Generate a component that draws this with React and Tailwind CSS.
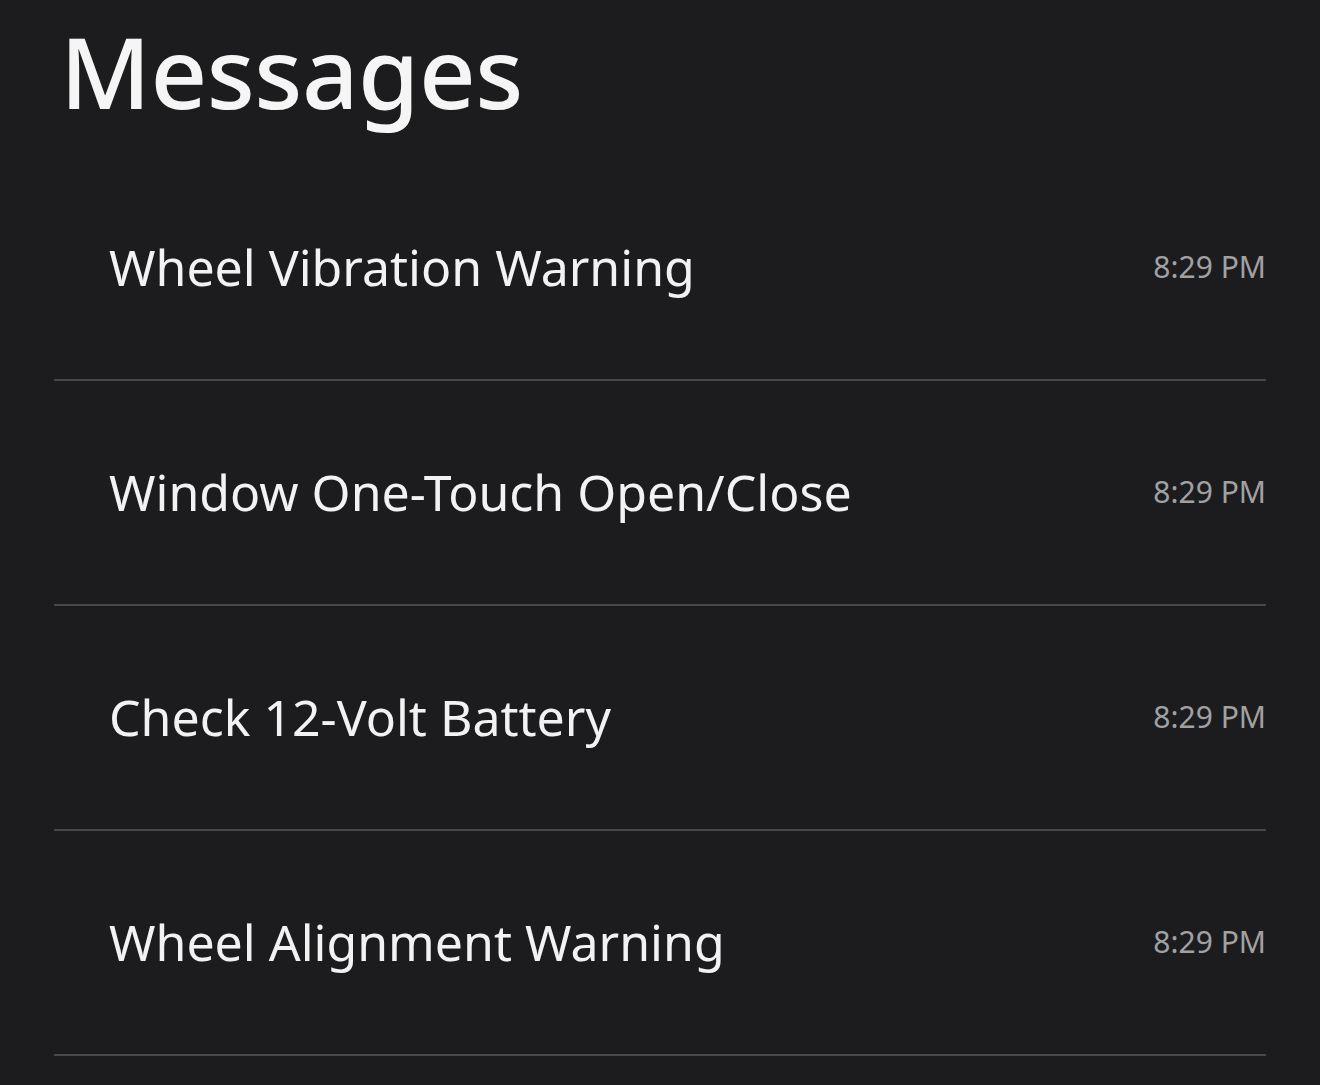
import React from "react";

const messages = [
  { title: "Wheel Vibration Warning", time: "8:29 PM" },
  { title: "Window One-Touch Open/Close", time: "8:29 PM" },
  { title: "Check 12-Volt Battery", time: "8:29 PM" },
  { title: "Wheel Alignment Warning", time: "8:29 PM" },
];

export default function App() {
  return (
    <div
      className="min-h-[1085px] w-full overflow-hidden bg-[#1c1c1e] px-[54px] text-white"
      style={{ fontFamily: '"Noto Sans", "Open Sans", sans-serif' }}
    >
      {/* Header */}
      <h1 className="h-[156px] pl-[6px] pt-[1px] text-[99px] font-medium leading-[140px] tracking-[-0.5px] text-[#f5f5f5]">
        Messages
      </h1>

      {/* Message list */}
      <ul>
        {messages.map((m) => (
          <li
            key={m.title}
            className="flex h-[225px] items-center justify-between border-b-2 border-[#48484a] pb-[2px] pl-[55px]"
          >
            <span className="text-[50px] leading-none text-[#f2f2f2]">{m.title}</span>
            <span className="text-[30px] leading-none text-[#a1a1a3]">{m.time}</span>
          </li>
        ))}
      </ul>
    </div>
  );
}
